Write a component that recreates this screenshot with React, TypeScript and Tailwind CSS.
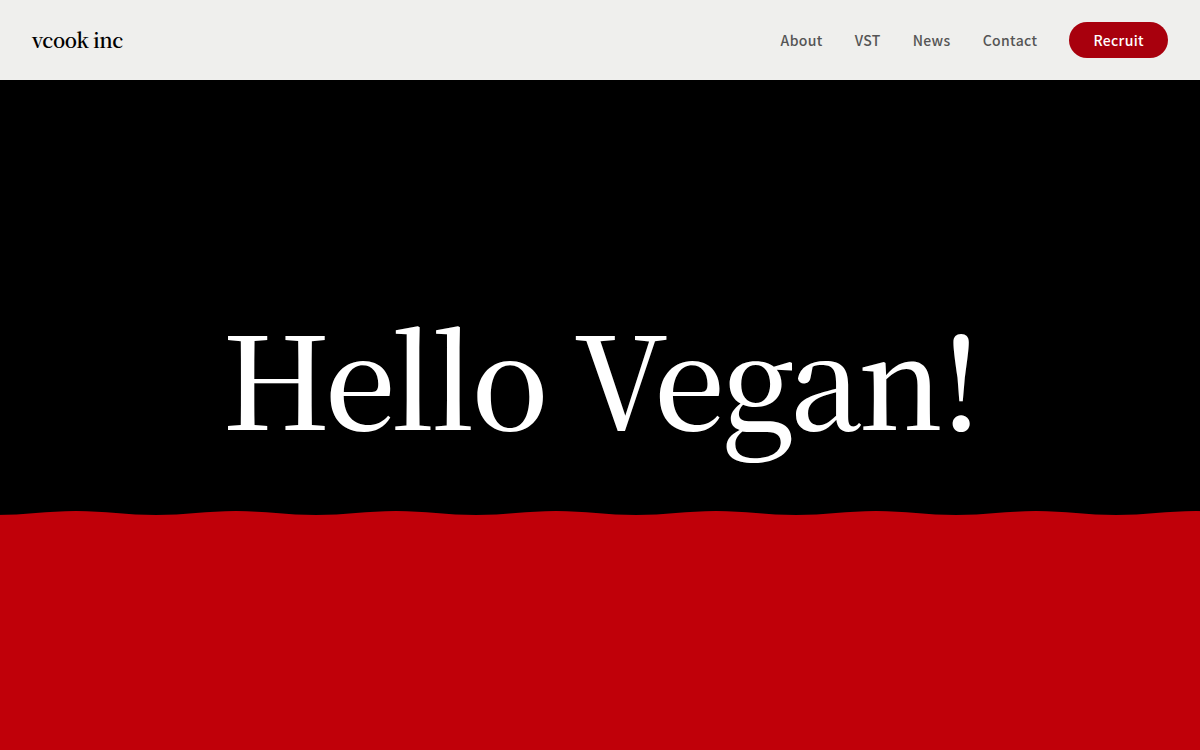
const navItems = [
  { label: "About", href: "#about" },
  { label: "VST", href: "#vst" },
  { label: "News", href: "#news" },
  { label: "Contact", href: "#contact" },
];

const Header = () => {
  return (
    <header className="flex h-20 shrink-0 items-center justify-between bg-[#efefed] px-8">
      <a
        href="#top"
        className="font-['Noto_Serif_CJK_JP','Liberation_Serif',serif] text-xl font-semibold tracking-tight text-black"
      >
        vcook inc
      </a>
      <nav className="flex items-center gap-8 font-['Noto_Sans_CJK_JP',sans-serif] text-sm font-medium tracking-wide text-[#555555]">
        {navItems.map((item) => (
          <a key={item.label} href={item.href}>
            {item.label}
          </a>
        ))}
        <a
          href="#recruit"
          className="flex h-9 items-center rounded-full bg-[#a8000d] px-6 text-white"
        >
          Recruit
        </a>
      </nav>
    </header>
  );
};

const Wave = () => {
  return (
    <svg className="block h-1.5 w-full bg-black" aria-hidden="true">
      <defs>
        <pattern id="wave" x="-4" width="160" height="6" patternUnits="userSpaceOnUse">
          <path d="M0 5C29 5 51 1 80 1S131 5 160 5V6H0Z" fill="#c00009" />
        </pattern>
      </defs>
      <rect width="100%" height="6" fill="url(#wave)" />
    </svg>
  );
};

const Hero = () => {
  return (
    <main className="flex flex-1 flex-col bg-black">
      <div className="flex flex-1 items-end justify-center pb-[71px]">
        <h1 className="text-center font-['Noto_Serif_CJK_JP','Liberation_Serif',serif] text-9xl leading-none font-medium tracking-tight text-white">
          Hello Vegan!
        </h1>
      </div>
      <div className="flex h-[32vh] flex-col bg-[#c00009]">
        <Wave />
      </div>
    </main>
  );
};

const App = () => {
  return (
    <div id="top" className="flex min-h-screen flex-col">
      <Header />
      <Hero />
    </div>
  );
};

export default App;
